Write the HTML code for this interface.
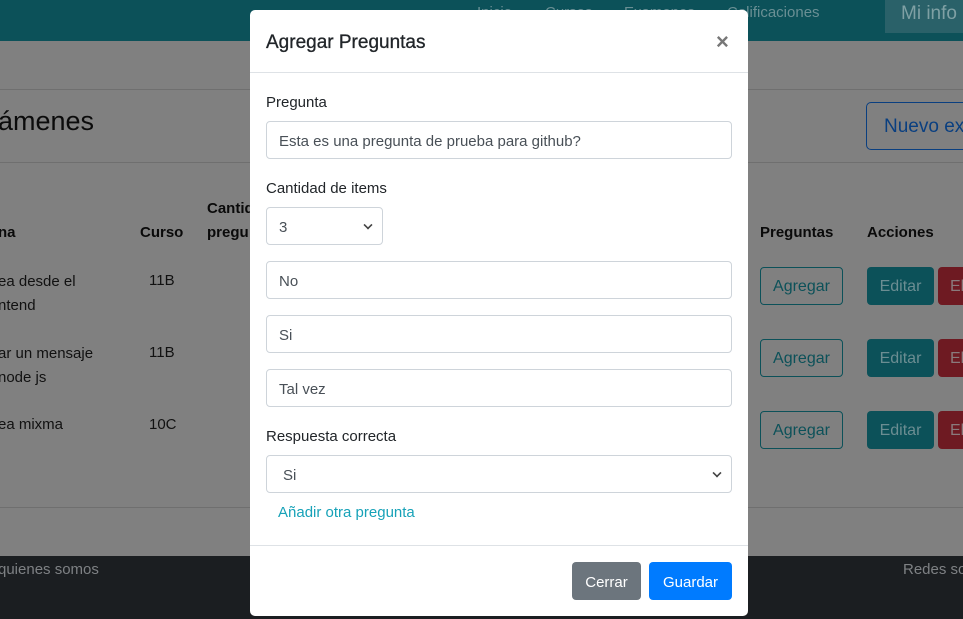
<!DOCTYPE html>
<html><head><meta charset="utf-8"><style>
*{box-sizing:border-box;margin:0;padding:0}
body{width:963px;height:619px;overflow:hidden;position:relative;background:#808080;font-family:"Liberation Sans",sans-serif;font-size:15px;color:#111}
.a{position:absolute;white-space:nowrap}
.nav{left:0;top:0;width:963px;height:41px;background:#0c5159}
.nl{color:#6a8f94;font-size:15px;top:4px}
.foot{left:0;top:556px;width:963px;height:63px;background:#1b1e21;color:#7e8184}
.bt{color:#0a0a0a;font-weight:bold}
.ag{width:83px;height:38px;border:1px solid #0c5159;border-radius:4px;color:#0c5159;font-size:16px;text-align:center;line-height:38px}
.ed{width:67px;height:38px;background:#0c5159;border-radius:4px;color:#6b8d92;font-size:16px;text-align:center;line-height:40px}
.el{width:30px;height:38px;background:#6e1a22;border-radius:4px 0 0 4px;color:#8a7a7c;font-size:16px;line-height:40px;padding-left:12px}
.m{left:250px;top:10px;width:498px;height:606px;background:#fff;border-radius:5px}
.in{left:16px;width:466px;height:38px;border:1px solid #ced4da;border-radius:4px;padding-left:12px;line-height:40px;color:#495057}
.lb{left:16px;color:#212529}
.chev{position:absolute;right:10px;top:13px;width:8px;height:8px;border-right:2px solid #444;border-bottom:2px solid #444;transform:rotate(45deg) scale(.8)}
</style></head><body>
<div class="a nav"></div>
<div class="a nl" style="left:477px">Inicio</div>
<div class="a nl" style="left:545px">Cursos</div>
<div class="a nl" style="left:624px">Examenes</div>
<div class="a nl" style="left:727px">Calificaciones</div>
<div class="a" style="left:885px;top:0;width:78px;height:33px;background:#2a6169;color:#7fa0a4;font-size:19px;padding:3px 0 0 16px">Mi info</div>
<div class="a" style="left:0;top:89px;width:963px;height:1px;background:#6f6f6f"></div>
<div class="a" style="left:-2px;top:106px;font-size:27px;color:#0b0b0b">ámenes</div>
<div class="a" style="left:866px;top:102px;width:110px;height:48px;border:1px solid #0a3f80;border-radius:5px;color:#0a3f80;font-size:19px;padding:13px 0 0 17px">Nuevo ex</div>
<div class="a" style="left:0;top:162px;width:963px;height:1px;background:#6f6f6f"></div>
<div class="a bt" style="left:-2px;top:224px">na</div>
<div class="a bt" style="left:140px;top:224px">Curso</div>
<div class="a bt" style="left:207px;top:200px">Cantid</div>
<div class="a bt" style="left:207px;top:224px">pregu</div>
<div class="a bt" style="left:760px;top:224px">Preguntas</div>
<div class="a bt" style="left:867px;top:224px">Acciones</div>
<div class="a" style="left:-2px;top:270px;line-height:24px">ea desde el<br>ntend</div>
<div class="a" style="left:149px;top:272px">11B</div>
<div class="a" style="left:-2px;top:342px;line-height:24px">ar un mensaje<br>node js</div>
<div class="a" style="left:149px;top:344px">11B</div>
<div class="a" style="left:-2px;top:416px">ea mixma</div>
<div class="a" style="left:149px;top:416px">10C</div>
<div class="a ag" style="left:760px;top:267px">Agregar</div><div class="a ed" style="left:867px;top:267px">Editar</div><div class="a el" style="left:938px;top:267px">El</div>
<div class="a ag" style="left:760px;top:339px">Agregar</div><div class="a ed" style="left:867px;top:339px">Editar</div><div class="a el" style="left:938px;top:339px">El</div>
<div class="a ag" style="left:760px;top:411px">Agregar</div><div class="a ed" style="left:867px;top:411px">Editar</div><div class="a el" style="left:938px;top:411px">El</div>
<div class="a" style="left:0;top:507px;width:963px;height:1px;background:#6f6f6f"></div>
<div class="a foot"><span class="a" style="left:-2px;top:5px">quienes somos</span><span class="a" style="left:903px;top:5px">Redes so</span></div>
<div class="a m">
<div class="a" style="left:16px;top:22px;font-size:19px;color:#212529;-webkit-text-stroke:0.3px #212529">Agregar Preguntas</div>
<div class="a" style="left:466px;top:19px;font-size:22px;color:#777;font-weight:bold">×</div>
<div class="a" style="left:0;top:62px;width:498px;height:1px;background:#dee2e6"></div>
<div class="a lb" style="top:84px">Pregunta</div>
<div class="a in" style="top:111px">Esta es una pregunta de prueba para github?</div>
<div class="a lb" style="top:170px">Cantidad de items</div>
<div class="a in" style="top:197px;width:117px">3<span class="chev"></span></div>
<div class="a in" style="top:251px">No</div>
<div class="a in" style="top:305px">Si</div>
<div class="a in" style="top:359px">Tal vez</div>
<div class="a lb" style="top:418px">Respuesta correcta</div>
<div class="a in" style="top:445px;padding-left:16px">Si<span class="chev"></span></div>
<div class="a" style="left:28px;top:494px;color:#17a2b8">Añadir otra pregunta</div>
<div class="a" style="left:0;top:535px;width:498px;height:1px;background:#dee2e6"></div>
<div class="a" style="left:322px;top:552px;width:69px;height:38px;background:#6c757d;border-radius:4px;color:#fff;line-height:41px;text-align:center">Cerrar</div>
<div class="a" style="left:399px;top:552px;width:83px;height:38px;background:#007bff;border-radius:4px;color:#fff;line-height:41px;text-align:center">Guardar</div>
</div>
</body></html>
